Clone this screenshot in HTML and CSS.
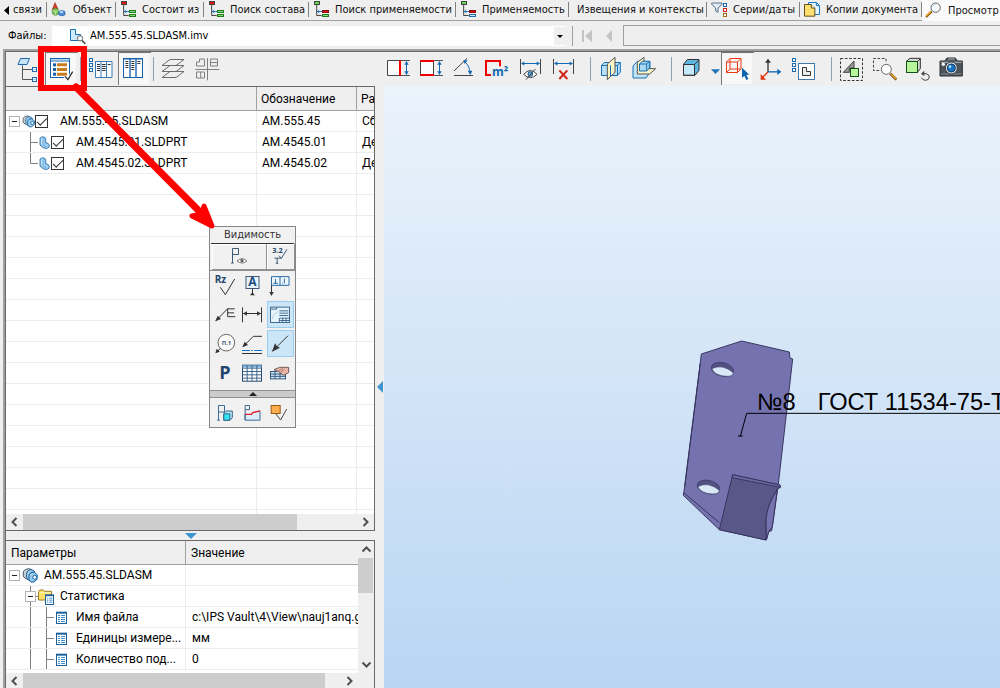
FILE: index.html
```html
<!DOCTYPE html>
<html lang="ru">
<head>
<meta charset="utf-8">
<title>Просмотр</title>
<link rel="stylesheet" href="styles.css">
</head>
<body>
<svg class="defs" aria-hidden="true">
  <symbol id="links" viewBox="0 0 54 54">
    <path d="M14 12V43.500H29M14 31.500H29" stroke="#444"/>
    <path d="M17 31.500H31M22 27l-5 4.500 5 4.500" stroke="#2a7ac0"/>
    <rect class="link-top" x="7.500" y="1.500" width="15" height="9"/>
    <rect class="link-mid" x="31.500" y="28.500" width="18" height="6"/>
    <rect class="link-low" x="31.500" y="40.500" width="18" height="6"/>
  </symbol>
  <symbol id="minus" viewBox="18 81 48 63">
    <rect x="28.500" y="97.500" width="30" height="30" fill="#fff" stroke="#b4b4b4"/>
    <path d="M36 112.500H51" stroke="#222"/>
  </symbol>
  <symbol id="asm" viewBox="66 81 48 63">
    <path d="M76 95l9-3 9 2 2 6-10 4-2 20-6-2-8-6 0-16z" fill="#c4d0d8" stroke="#46596a"/>
    <path d="M84 98l8-3 8 2 5 5-13 4-2 22-6-3-4-6 0-14z" fill="#a9d2f0" stroke="#1c5f96"/>
    <path d="M92 104l11-2 9 9-1 13-9 8-10 0-5-7 0-14z" fill="#9bccef" stroke="#125a96"/>
    <circle cx="104" cy="118" r="6" fill="#e6f4fc" stroke="#1b659f"/>
  </symbol>
  <symbol id="part" viewBox="114 144 48 63">
    <path d="M121.500 159l9-5 9 3 3 4v16l9 2 4 6-1 8-9 5-12-3-12-10z" fill="#9fd0f3" stroke="#17649f"/>
    <path d="M126 161v19l5 3v-17z" fill="#d9efff"/>
    <path d="M132 164l8-4M132 165v19l12 8" stroke="#5aa0d6"/>
  </symbol>
  <symbol id="sheet" viewBox="162 321 48 63">
    <rect x="169.500" y="337.500" width="30" height="33" fill="#fff" stroke="#1c5f9d"/>
    <path d="M168 338H201" stroke="#1c5f9d" stroke-width="6"/>
    <path d="M174 346.500h6m3 0h12M174 352.500h6m3 0h12M174 358.500h6m3 0h12M174 364.500h6m3 0h12" stroke="#3d8bd0"/>
  </symbol>
</svg>

<nav class="tabs">
  <a class="tab tab-cut" href="#"><svg width="5" height="9" viewBox="0 0 5 9"><path d="M5 0v9L0 4.500z" fill="#000"/></svg>связи</a>
  <a class="tab" href="#"><svg class="ic18" viewBox="150 3 54 54">
    <path d="M165 8l9 19-8 9-10-5z" fill="#e33a25" stroke="#8d3a20" stroke-width="2"/>
    <path d="M157 29l10-5 10 6v10l-10 7-10-6z" fill="#7ac55a" stroke="#3e7c31" stroke-width="2"/>
    <path d="M157 30l10 5 10-5M167 35v11" stroke="#e0f5c4" stroke-width="2"/>
    <path d="M176 35q9-7 19 0v9q-9 7-19 0z" fill="#4b8fdd" stroke="#1e4f99" stroke-width="2"/>
    <ellipse cx="184" cy="36" rx="6" ry="3" fill="#bcdcff"/></svg>Объект</a>
  <a class="tab" href="#"><svg class="ic18 down"><use href="#links"/></svg>Состоит из</a>
  <a class="tab" href="#"><svg class="ic18 down"><use href="#links"/></svg>Поиск состава</a>
  <a class="tab" href="#"><svg class="ic18 up"><use href="#links"/></svg>Поиск применяемости</a>
  <a class="tab" href="#"><svg class="ic18 up blue"><use href="#links"/></svg>Применяемость</a>
  <a class="tab plain" href="#">Извещения и контексты</a>
  <a class="tab" href="#"><svg class="ic18" viewBox="150 3 54 54">
    <path d="M155 9H186V13L174 24V37L167 33V24L155 13z" fill="#dce8f0" stroke="#58718a"/>
    <path d="M162 12l8 9" stroke="#fff"/>
    <rect x="190.500" y="10.500" width="9" height="9" fill="#fff" stroke="#1c6cb4"/>
    <rect x="190.500" y="25.500" width="9" height="9" fill="#fff" stroke="#d21f1f"/>
    <rect x="190.500" y="40.500" width="9" height="9" fill="#fff" stroke="#a86a13"/></svg>Серии/даты</a>
  <a class="tab" href="#"><svg class="ic18" viewBox="429 3 54 54">
    <path d="M445.500 7.500h24l9 9v27h-33z" fill="#e8f5ff" stroke="#1778c4"/>
    <path d="M469 7v10h10" stroke="#1778c4"/>
    <path d="M433.500 13.500h21l10 10v25h-31z" fill="#ffdf71" stroke="#65501d"/>
    <path d="M454 13v11h11" fill="#fff" stroke="#65501d"/></svg>Копии документа</a>
  <a class="tab active" href="#"><svg class="ic18" viewBox="795 3 54 54">
    <path d="M815 31L798 48" stroke="#7b4b0c" stroke-width="7"/><path d="M813 31L798 46" stroke="#f2a52c" stroke-width="4"/>
    <circle cx="827" cy="20" r="14" fill="#f5fbff" stroke="#646464"/><path d="M817 18q3-8 11-7" stroke="#c9d6df"/></svg>Просмотр</a>
</nav>

<div class="filebar">
  <label for="file">Файлы:</label>
  <div class="combo">
    <select id="file"><option>AM.555.45.SLDASM.imv</option></select>
    <svg class="combo-icon" viewBox="207 78 54 54">
      <path d="M211.500 85.500h15v15h15v18h-30z" fill="#cfeafb" stroke="#1670b4"/>
      <path d="M246 118l10 11" stroke="#555" stroke-width="5"/><circle cx="240" cy="112" r="8" fill="#f4fbff" stroke="#666"/></svg>
    <svg class="combo-arrow" viewBox="0 0 12 18"><path d="M0 0h12v18H0z" fill="#efefef"/><path d="M3 8h6l-3 3z" fill="#000"/></svg>
  </div>
  <span class="rule"></span>
  <button class="nav" aria-label="В начало" disabled><svg width="12" height="12" viewBox="0 0 12 12"><path d="M1 0h2v12H1zM11 0v12L4 6z" fill="#c3c3c3"/></svg></button>
  <button class="nav" aria-label="Назад" disabled><svg width="12" height="12" viewBox="0 0 12 12"><path d="M9 0v12L3 6z" fill="#c3c3c3"/></svg></button>
  <input class="address" type="text" aria-label="Документ">
</div>

<div class="workspace">
 <div class="frame">
  <div class="toolbar">
    <div class="tools tools-left">
      <button class="tool" aria-label="Дерево"><svg viewBox="36 24 99 99">
        <path d="M61.500 43.500H88.500L81 61.500H54z" fill="#c5e4f7" stroke="#1c69ad"/>
        <path d="M67.500 64V106.500H96M67.500 76.500H96" stroke="#555"/>
        <rect x="97.500" y="70.500" width="12" height="12" fill="#fff" stroke="#1c69ad"/><rect x="97.500" y="100.500" width="12" height="12" fill="#fff" stroke="#1c69ad"/>
        <path d="M100 76.500h7M100 106.500h7" stroke="#8ec5ea"/></svg></button>
      <button class="tool pressed" aria-label="Видимость"><svg viewBox="135 24 99 99">
        <rect x="151.500" y="43.500" width="57" height="57" fill="#fff" stroke="#1460ad"/><path d="M150 43.500H210M150 51H210" stroke="#1460ad"/>
        <path d="M153 47H208" stroke="#9fd0f2"/>
        <rect x="159" y="58" width="9" height="9" fill="#1460ad"/><rect x="159" y="72" width="9" height="9" fill="#1460ad"/><rect x="159" y="86" width="9" height="9" fill="#1460ad"/>
        <path d="M171 62.500H201M171 76.500H201M171 90.500H201" stroke="#c97a1a" stroke-width="9"/>
        <path d="M195 97l9 10 14-24" stroke="#fff" stroke-width="9"/><path d="M195 97l9 10 14-24" stroke="#333" stroke-width="4"/></svg></button>
      <span class="sep"></span>
      <button class="tool" aria-label="Столбцы"><svg viewBox="255 24 99 99">
        <rect x="268.500" y="43.500" width="9" height="9" fill="#fff" stroke="#1c6cb4"/><rect x="268.500" y="58.500" width="9" height="9" fill="#fff" stroke="#1c6cb4"/><rect x="268.500" y="73.500" width="9" height="9" fill="#fff" stroke="#1c6cb4"/>
        <path d="M285 52.500H336V100.500H286.500V52.500M303 52V100M319.500 52V100" fill="#f8fcff" stroke="#3c7cb4"/>
        <path d="M291 61.500h9M291 67.500h9M291 73.500h9M291 79.500h9M306 61.500h11M306 67.500h11M306 73.500h11M306 79.500h11M323 61.500h9" stroke="#333"/></svg></button>
      <button class="tool pressed" aria-label="Таблица"><svg viewBox="354 24 99 99">
        <rect x="370.500" y="43.500" width="57" height="57" fill="#fff" stroke="#1460ad"/><path d="M390 43V100M408 43V100M370 44.500H428" stroke="#1460ad" stroke-width="4"/>
        <path d="M376 52.500h9M376 58.500h9M376 64.500h9M376 70.500h9M394 52.500h9M394 58.500h9M394 64.500h9M394 70.500h9M394 76.500h9M412 52.500h9M412 58.500h9" stroke="#333"/></svg></button>
      <span class="sep"></span>
      <button class="tool" aria-label="Слои"><svg viewBox="474 24 99 99" stroke="#6c6c6c" fill="#efefef">
        <path d="M486 100.500H528L552 82.500H510z"/><path d="M486 82.500H528L552 64.500H510z"/><path d="M486 64.500H528L552 46.500H510z"/></svg></button>
      <button class="tool" aria-label="Виды"><svg viewBox="573 24 99 99" stroke="#808080">
        <path d="M589.500 66V54H598.500V45H613.500V66zM631.500 45H652.500V66H631.500zM589.500 84H613.500V102H589.500zM602 84V102M631 55.500H652M622.500 42V109M586 76.500H658"/></svg></button>
    </div>
    <div class="tools">
      <button class="tool" aria-label="Ширина"><svg viewBox="6 12 99 99">
        <path d="M60 37.500H22.500V82.500H60" fill="#fafcfe" stroke="#444"/><path d="M60 37.500H90M60 82.500H90" stroke="#555"/><path d="M60 36V84" stroke="#f00000" stroke-width="6"/>
        <path d="M79.500 41V79" stroke="#1269b3"/><path d="M73 50l6.500-11 6.500 11zM73 70l6.500 11 6.500-11z" fill="#1269b3"/></svg></button>
      <button class="tool" aria-label="Высота"><svg viewBox="105 12 99 99">
        <rect x="121.500" y="39" width="39" height="42" fill="#fafcfe" stroke="#444"/><path d="M160 37.500H189M160 82.500H189" stroke="#555"/><path d="M120 39H162M120 81H162" stroke="#f00000" stroke-width="6"/>
        <path d="M178.500 41V79" stroke="#1269b3"/><path d="M172 50l6.500-11 6.500 11zM172 70l6.500 11 6.500-11z" fill="#1269b3"/></svg></button>
      <button class="tool" aria-label="Угол"><svg viewBox="204 12 99 99">
        <path d="M222 69L261 31M222 82.500H279" stroke="#444"/><path d="M255 42Q270 55 270 78" stroke="#1269b3"/><path d="M250 37h13l-9 11zM263 68h14l-6 13z" fill="#1269b3"/></svg></button>
      <button class="tool" aria-label="Площадь"><svg viewBox="303 12 99 99">
        <path d="M333 81H318V39H360V55" fill="none" stroke="#f00000" stroke-width="6"/>
        <text class="m2" x="336" y="84">m²</text></svg></button>
      <button class="tool" aria-label="Скрыть размеры"><svg viewBox="402 12 99 99">
        <path d="M421.500 33V78M481.500 33V78" stroke="#444"/><path d="M426 46.500H478" stroke="#1269b3"/><path d="M423 46.500l10-6v12zM480 46.500l-10-6v12z" fill="#1269b3"/>
        <path d="M431 79Q451 56 471 79Q451 99 431 79z" fill="#fff" stroke="#444"/><circle cx="451" cy="78" r="7" fill="#5faadb" stroke="#1c5b8e"/><path d="M438 95L466 63" stroke="#444"/></svg></button>
      <button class="tool" aria-label="Удалить размеры"><svg viewBox="501 12 99 99">
        <path d="M520.500 33V78M580.500 33V78" stroke="#444"/><path d="M525 46.500H577" stroke="#1269b3"/><path d="M522 46.500l10-6v12zM579 46.500l-10-6v12z" fill="#1269b3"/>
        <path d="M538 67L562 93M562 67L538 93" stroke="#cf2516" stroke-width="6"/></svg></button>
      <span class="sep wide"></span>
      <button class="tool" aria-label="Сечение"><svg viewBox="12 12 99 99">
        <path d="M34.500 52.500L43 43.500H91V72L82.500 82.500H34.500z" fill="#b9e0f5" stroke="#1670b4"/><path d="M34 52.500H82.500V83M82 52L91 43" stroke="#1670b4"/>
        <path d="M52 48L75 28V73L52 95z" fill="#fbf3c5" stroke="#555"/><path d="M61.500 52V84" stroke="#1670b4"/></svg></button>
      <button class="tool" aria-label="Разрез"><svg viewBox="111 12 99 99">
        <path d="M129 54L142 40H180V72L168 90H129z" fill="#c0e3f6" stroke="#1670b4"/>
        <path d="M142 43L162 28V62H197L179 78H142z" fill="#fdf5c4" stroke="#555"/>
        <path d="M148.500 48L157 40H178V60L170 69H148.500zM148.500 48H170V69M170 48L178 40" fill="#a9d8f3" stroke="#1670b4"/></svg></button>
      <span class="sep wide"></span>
      <button class="tool" aria-label="Вид модели"><svg viewBox="255 12 99 99">
        <path d="M280.500 49L292 34.500H327V67L315 82H280.500z" fill="#5db5e2" stroke="#333"/><path d="M280.500 49.500H313.500V81.500H280.500z" fill="#c4e9f8" stroke="#333"/><path d="M314 49L327 36" stroke="#333"/></svg></button>
      <button class="drop" aria-label="Варианты вида"><svg viewBox="354 12 39 99"><path d="M363 64H390L376.500 78z" fill="#2275b5"/></svg></button>
      <button class="tool pressed" aria-label="Выбор"><svg viewBox="393 12 99 99">
        <path d="M409.500 42L420 31.500H453V63L442.500 73.500H409.500zM409.500 42H442.500V73.500M442.500 42L453 31.500M420 32V63H453M420 63L409.500 73.500" stroke="#ef3b13"/>
        <path d="M456 59V90L463 83 469 96 475 93 469 80H478z" fill="#0d62ad"/></svg></button>
      <button class="tool" aria-label="Оси"><svg viewBox="492 12 99 99">
        <path d="M534 72V38" stroke="#333" stroke-width="4"/><path d="M525 44l9-12 9 12z" fill="#333"/><path d="M534 71.500H566" stroke="#1269b3" stroke-width="4"/><path d="M562 62l12 9.500-12 9.500z" fill="#1269b3"/>
        <path d="M534 72L518 88" stroke="#e23212" stroke-width="4"/><path d="M512 78v17h16z" fill="#e23212"/></svg></button>
      <button class="tool" aria-label="Структура"><svg viewBox="-9 12 99 99">
        <rect x="7.500" y="31.500" width="9" height="9" fill="#fff" stroke="#1c6cb4"/><rect x="7.500" y="46.500" width="9" height="9" fill="#fff" stroke="#1c6cb4"/><rect x="7.500" y="61.500" width="9" height="9" fill="#fff" stroke="#1c6cb4"/>
        <rect x="25.500" y="46.500" width="48" height="48" fill="#fff" stroke="#3f78ac"/><path d="M37.500 58.500H49.500V70.500H61.500V82.500H37.500z" fill="#ececec" stroke="#333"/></svg></button>
      <span class="sep wide"></span>
      <button class="tool" aria-label="Показать всё"><svg viewBox="135 12 99 99">
        <rect x="151.500" y="31.500" width="66" height="66" stroke="#333" stroke-dasharray="8 5"/>
        <path d="M160 73L192 39V60H178V73z" fill="#9a9a9a" stroke="#444"/><rect x="181.500" y="61.500" width="24" height="24" fill="#b7f69d" stroke="#0d5213"/></svg></button>
      <button class="tool" aria-label="Увеличить область"><svg viewBox="234 12 99 99">
        <path d="M288 40V31.500H250.500V67.500H270" stroke="#444" stroke-dasharray="8 5"/>
        <path d="M301 77L319 95" stroke="#6c4410" stroke-width="8"/><path d="M303 78L318 93" stroke="#f4a72f" stroke-width="4"/><circle cx="289" cy="64" r="15" fill="#fcfeff" stroke="#666"/></svg></button>
      <button class="tool" aria-label="Повернуть"><svg viewBox="333 12 99 99">
        <path d="M349 40L360 31H391V62L382 73z" fill="#d6d6d6" stroke="#333"/><rect x="349.500" y="40.500" width="33" height="33" fill="#b7f69d" stroke="#0d5213"/><path d="M383 40L391 32" stroke="#333"/>
        <path d="M399 77H408Q418 79 418 87Q417 97 406 97Q397 96 394 89" stroke="#444"/><path d="M403 68v17l-10-8z" fill="#444"/></svg></button>
      <button class="tool" aria-label="Снимок"><svg viewBox="432 12 99 99">
        <path d="M450 39H464L471 30H496L502 39H517V84H450z" fill="#4d555c" stroke="#2b2f33"/><path d="M452 43H515M474 33H494" stroke="#aeb7be"/><path d="M452 78H515" stroke="#80888f"/>
        <circle cx="484" cy="60" r="18" fill="#d8dde0" stroke="#3a4045"/><circle cx="484" cy="60" r="12" fill="#1573c8" stroke="#103b66"/><circle cx="480" cy="56" r="4" fill="#b4e1ff"/><circle cx="460" cy="49" r="5" fill="#fff"/></svg></button>
    </div>
  </div>

  <div class="content">
    <div class="side">
      <section class="panel panel-tree">
        <div class="grid-area tree-area">
          <table class="grid tree-grid">
            <colgroup><col class="c-name"><col class="c-code"><col></colgroup>
            <thead><tr><th></th><th>Обозначение</th><th>Ра</th></tr></thead>
            <tbody>
              <tr><td><div class="node"><button class="twig" aria-label="Свернуть"><svg><use href="#minus"/></svg></button><svg class="kind"><use href="#asm"/></svg><input type="checkbox" id="n1" checked><label for="n1">AM.555.45.SLDASM</label></div></td><td>AM.555.45</td><td>Сб</td></tr>
              <tr><td><div class="node level"><svg class="twig" viewBox="66 144 48 63"><path d="M91.500 141V207M91.500 175.500H114" stroke="#808080"/></svg><svg class="kind"><use href="#part"/></svg><input type="checkbox" id="n2" checked><label for="n2">AM.4545.01.SLDPRT</label></div></td><td>AM.4545.01</td><td>Де</td></tr>
              <tr><td><div class="node level"><svg class="twig" viewBox="66 144 48 63"><path d="M91.500 141V175.500H114" stroke="#808080"/></svg><svg class="kind"><use href="#part"/></svg><input type="checkbox" id="n3" checked><label for="n3">AM.4545.02.SLDPRT</label></div></td><td>AM.4545.02</td><td>Де</td></tr>
            </tbody>
          </table>
        </div>
        <div class="hscroll"><svg class="arr" viewBox="0 0 17 15"><path d="M10.500 3.500L6.500 7.500l4 4" stroke="#505050" stroke-width="2"/></svg><span class="track"><span class="thumb"></span></span><svg class="arr" viewBox="0 0 17 15"><path d="M6.500 3.500l4 4-4 4" stroke="#505050" stroke-width="2"/></svg></div>
      </section>
      <div class="split-h"><svg width="12" height="6" viewBox="0 0 12 6"><path d="M0 0h12L6 6z" fill="#3f95d2"/></svg></div>
      <section class="panel panel-props">
        <div class="props-row">
          <div class="grid-area props-area">
            <table class="grid props-grid">
              <colgroup><col class="c-param"><col></colgroup>
              <thead><tr><th>Параметры</th><th>Значение</th></tr></thead>
              <tbody>
                <tr><td><div class="node"><button class="twig" aria-label="Свернуть"><svg><use href="#minus"/></svg></button><svg class="kind16"><use href="#asm"/></svg><span>AM.555.45.SLDASM</span></div></td><td></td></tr>
                <tr><td><div class="node level"><button class="twig" aria-label="Свернуть"><svg viewBox="66 258 48 63"><path d="M91.500 258V321M91 289.500H114" stroke="#808080"/><rect x="76.500" y="274.500" width="30" height="30" fill="#fff" stroke="#b4b4b4"/><path d="M84 289.500H99" stroke="#222"/></svg></button><svg class="kind16" viewBox="114 258 48 63">
                  <path d="M115.500 275l4-5h10l4 4h21v26h-39z" fill="#ffdf68" stroke="#9b7b20"/><path d="M118 278H152" stroke="#fff5bd"/><rect x="136.500" y="285.500" width="24" height="28" fill="#fff" stroke="#1c5f9d"/><path d="M135 286H162" stroke="#1c5f9d" stroke-width="5"/><path d="M141 294.500h4m3 0h9M141 300.500h4m3 0h9M141 306.500h4m3 0h9" stroke="#3d8bd0"/></svg><span>Статистика</span></div></td><td></td></tr>
                <tr><td><div class="node level"><svg class="twig" viewBox="66 321 48 63"><path d="M91.500 321V384" stroke="#808080"/></svg><svg class="twig" viewBox="114 321 48 63"><path d="M139.500 318V384M139 352.500H162" stroke="#808080"/></svg><svg class="kind16"><use href="#sheet"/></svg><span>Имя файла</span></div></td><td>c:\IPS Vault\4\View\nauj1anq.g</td></tr>
                <tr><td><div class="node level"><svg class="twig" viewBox="66 321 48 63"><path d="M91.500 321V384" stroke="#808080"/></svg><svg class="twig" viewBox="114 321 48 63"><path d="M139.500 318V384M139 352.500H162" stroke="#808080"/></svg><svg class="kind16"><use href="#sheet"/></svg><span>Единицы измере...</span></div></td><td>мм</td></tr>
                <tr><td><div class="node level"><svg class="twig" viewBox="66 321 48 63"><path d="M91.500 321V384" stroke="#808080"/></svg><svg class="twig" viewBox="114 321 48 63"><path d="M139.500 318V384M139 352.500H162" stroke="#808080"/></svg><svg class="kind16"><use href="#sheet"/></svg><span>Количество под...</span></div></td><td>0</td></tr>
              </tbody>
            </table>
          </div>
          <div class="vscroll"><svg class="varr" viewBox="0 0 15 17"><path d="M4 10.500l4-4 4 4" stroke="#505050" stroke-width="2"/></svg><span class="vtrack"><span class="vthumb"></span></span><svg class="varr" viewBox="0 0 15 17"><path d="M4 6.500l4 4 4-4" stroke="#505050" stroke-width="2"/></svg></div>
        </div>
        <div class="hscroll short"><svg class="arr" viewBox="0 0 17 15"><path d="M10.500 3.500L6.500 7.500l4 4" stroke="#505050" stroke-width="2"/></svg><span class="track"><span class="thumb"></span></span><svg class="arr" viewBox="0 0 17 15"><path d="M6.500 3.500l4 4-4 4" stroke="#505050" stroke-width="2"/></svg></div>
      </section>
    </div>
    <div class="split-v"><svg width="6" height="12" viewBox="0 0 6 12"><path d="M6 0v12L0 6z" fill="#3f95d2"/></svg></div>
    <div class="viewport">
      <svg class="model" viewBox="0 0 990 660">
        <g stroke="#38355f" stroke-linejoin="round">
          <path d="M94 72L215 33 358 66 360 84 368 87 325 462 307 590 305 602 296 605 289 630 148 599 40 496 44 470z" fill="#7573af"/>
          <path d="M42 489L148 578M44 470L91 100" fill="none"/>
          <path d="M188 434L330 465 331 472 322 478Q291 525 288 570L288 630 148 599z" fill="#585787"/>
          <path d="M188 434L330 465 331 472 186 443z" fill="#6c6aa5"/>
          <path d="M322 478Q291 525 288 570L289 630 296 605 307 590z" fill="#7573af"/>
          <g fill="#535184" stroke-width="2"><ellipse cx="157" cy="118" rx="34" ry="20" transform="rotate(12 157 118)"/><ellipse cx="115" cy="471" rx="34" ry="20" transform="rotate(12 115 471)"/></g>
          <g fill="#d9e8f7" stroke-width="2"><path d="M125 116Q157 100 190 128Q190 140 168 139Q134 137 125 116z"/><path d="M83 470Q115 453 148 481Q148 493 126 492Q92 490 83 470z"/></g>
        </g>
        <path d="M990 250H230L211 319M204 318H218" fill="none" stroke="#000"/>
        <text x="261" y="240">№8</text><text x="443" y="240">ГОСТ 11534-75-Т</text>
      </svg>
    </div>
  </div>
 </div>
</div>

<div class="palette" role="toolbar" aria-label="Видимость">
  <div class="palette-title">Видимость</div>
  <div class="palette-head">
    <button aria-label="Показать обозначения"><svg width="54" height="25" viewBox="96 135 162 75"><path d="M157.500 192V148.500H175.500V166.500H158M153 192h8" stroke="#3f5974"/><path d="M171 186Q186 172 201 186Q186 198 171 186z" fill="#fff" stroke="#777"/><circle cx="186" cy="185" r="5" fill="#666"/></svg></button>
    <button aria-label="Шероховатость"><svg width="27" height="25" viewBox="258 135 81 75"><text class="ra" x="274" y="161">3.2</text><path d="M294 170l7 8 17-27M280 177.500H301M288.500 178V193M284 192.500h8" stroke="#3f5974"/></svg></button>
  </div>
  <div class="palette-grid main-set">
    <button aria-label="Rz"><svg viewBox="90 213 84 87"><text class="rz" x="104" y="250">Rz</text><path d="M121 262L136 284 164 237" stroke="#333"/></svg></button>
    <button aria-label="База"><svg viewBox="174 213 84 87"><rect x="198" y="229.500" width="39" height="36" fill="#e8f3fb" stroke="#3f5974"/><text class="base" x="205" y="259">A</text><path d="M217.500 266V284" stroke="#333"/><path d="M210 286l7-9 8 9z" fill="#333"/></svg></button>
    <button aria-label="Допуск"><svg viewBox="258 213 84 87"><path d="M274.500 230H327V256H274.500zM300 230V256" fill="#eef7fd" stroke="#2a6aa5"/><path d="M286.500 237V250M280 250H294M313 236V250M307 250h2" stroke="#2a6aa5"/><path d="M274.500 256V280" stroke="#333"/><path d="M268 276h13l-6.500 12z" fill="#333"/></svg></button>
    <button aria-label="Сварка"><svg viewBox="90 300 84 87"><path d="M107 363L143 326V350H166M143 326.500H164M143 338.500H162" stroke="#333"/><path d="M106 364l7-17 10 10z" fill="#333"/></svg></button>
    <button aria-label="Размеры"><svg viewBox="174 300 84 87"><path d="M187.500 322V367M244.500 322V367M190 340.500H242" stroke="#333"/><path d="M189 340.500l12-7v14zM243 340.500l-12-7v14z" fill="#333"/></svg></button>
    <button class="on" aria-label="Основная надпись"><svg viewBox="258 300 84 87"><rect x="271.500" y="321.500" width="57" height="46" fill="#e6f4fc" stroke="#416b91"/><path d="M272 327.500H290V322M298 332.500H325M298 339.500H325M298 346.500H325M298 354.500V367M298 354.500H328M298 361.500H328M308 355V367M318 355V367" stroke="#416b91"/><path d="M276 358Q280 340 294 334" stroke="#b8c9d8"/></svg></button>
    <button aria-label="Позиции"><svg viewBox="90 387 84 87"><circle cx="139" cy="428" r="25" fill="#fafafa" stroke="#666"/><text class="tiny" x="125" y="434">П.1</text><path d="M121 445L110 457" stroke="#333"/><path d="M106 460l4-14 9 9z" fill="#333"/></svg></button>
    <button aria-label="Выноски"><svg viewBox="174 387 84 87"><path d="M189 440L220 409H246M186 460.500H246" stroke="#333"/><path d="M187 442l7-17 10 10z" fill="#333"/><path d="M186 451.500H246" stroke="#1276cf" stroke-dasharray="24 4 5 4"/></svg></button>
    <button class="on" aria-label="Стрелки"><svg viewBox="258 387 84 87"><path d="M277 454L324 407" stroke="#333"/><path d="M276 455l9-25 6 9 9 4z" fill="#333"/></svg></button>
    <button aria-label="P"><svg viewBox="90 474 84 87"><text class="pee" x="118" y="536">P</text></svg></button>
    <button aria-label="Таблицы"><svg viewBox="174 474 84 87"><rect x="187.500" y="495.500" width="57" height="48" fill="#fff" stroke="#23486d"/><path d="M187 499H245" stroke="#75add6" stroke-width="6"/><path d="M187 504.500H245M187 514.500H245M187 524.500H245M187 534.500H245M201.500 495V544M216 495V544M230.500 495V544" stroke="#3f6890"/></svg></button>
    <button aria-label="Технические требования"><svg viewBox="258 474 84 87"><rect x="271.500" y="514.500" width="45" height="22" fill="#d9edfa" stroke="#31597d"/><path d="M271 522H316M271 529H316M285 514V536M300 514V536" stroke="#31597d"/><path d="M282 509L299 502H326V518L310 526 300 517z" fill="#eab8ab" stroke="#745b58"/><path d="M292 515L308 506M298 520L314 508" stroke="#b77a6f"/></svg></button>
  </div>
  <button class="palette-fold" aria-label="Свернуть панель"><svg width="8" height="4" viewBox="0 0 8 4"><path d="M0 4h8L4 0z" fill="#222"/></svg></button>
  <div class="palette-grid">
    <button aria-label="Флажок и тело"><svg viewBox="90 594 84 87"><path d="M115.500 660V616.500H133.500V636H116M111 660.500h9" stroke="#3f6890"/><path d="M131 641l8-8h18v20l-7 8h-19z" fill="#aee5f2" stroke="#3f6890"/><path d="M131.500 641.500h18v19h-18z" fill="#2fe6f2" stroke="#3f6890"/></svg></button>
    <button aria-label="Флажок и профиль"><svg viewBox="174 594 84 87"><path d="M196 643H214Q217 636 225 636T240 632V660H196z" fill="#dceefa"/><path d="M195.500 660V616.500H208.500V629H196M195 642V660.500H240V633" stroke="#3f6890"/><path d="M196 643H214Q217 636 225 636T240 632" stroke="#e21c2a" stroke-width="4"/></svg></button>
    <button aria-label="Поверхность"><svg viewBox="258 594 84 87"><rect x="273.500" y="616.500" width="27" height="24" fill="#ffad4d" stroke="#9b5b18"/><path d="M287 641l15 19 18-33" stroke="#444"/></svg></button>
  </div>
</div>

<svg class="callout" viewBox="0 0 180 186" aria-hidden="true" stroke="#f00" stroke-linecap="round">
  <rect x="3" y="3" width="43" height="39" stroke-width="6"/>
  <path d="M38 41L164 168" stroke-width="7"/>
  <path d="M154 170L174 180 166 160 164 168z" fill="#f00" stroke-width="5" stroke-linejoin="round"/>
</svg>
</body>
</html>
```
FILE: styles.css
```css
* { box-sizing: border-box; }

html, body { height: 100%; }

body {
  margin: 0;
  display: flex;
  flex-direction: column;
  overflow: hidden;
  background: #efefef;
  color: #000;
  font: 12px/20px Roboto, "Noto Sans", sans-serif;
}

svg { display: block; flex: none; fill: none; stroke-width: 3; overflow: visible; }
svg text { stroke: none; }
.defs { position: absolute; width: 0; height: 0; }
button { display: flex; align-items: center; justify-content: center; margin: 0; padding: 0; border: 0; background: none; font: inherit; }

/* document tabs */
.tabs {
  flex: none;
  display: grid;
  grid-template-columns: 47px 69px 88px 105px 147px 113px 138px 93px 122px 1fr;
  height: 21px;
  font: 11px/18px "DejaVu Sans Condensed", "DejaVu Sans", sans-serif;
}
.tab {
  display: flex;
  align-items: center;
  gap: 5px;
  padding-left: 3px;
  border-bottom: 1px solid #a0a0a0;
  color: #111;
  text-decoration: none;
  white-space: nowrap;
  background: linear-gradient(#808080, #808080) right 2px / 1px 15px no-repeat;
}
.tab-cut { padding-left: 4px; gap: 4px; }
.plain { padding-left: 8px; }
.active { border-bottom: 0; background: #fafafa; }
.ic18 { width: 18px; height: 18px; }
.down { --top: #e01010; --mid: #7fe070; --low: #7fe070; --mid-line: #1d7a1d; --low-line: #1d7a1d; }
.up { --top: #66d94e; --mid: #e01010; --low: #7fe070; --mid-line: #8c0d0d; --low-line: #1d7a1d; }
.blue { --low: #d4ecfc; --low-line: #1c6cb4; }
.link-top { fill: var(--top); stroke: #444; }
.link-mid { fill: var(--mid); stroke: var(--mid-line); }
.link-low { fill: var(--low); stroke: var(--low-line); }

/* file selector row */
.filebar {
  flex: none;
  display: flex;
  align-items: center;
  height: 28px;
  padding: 2px 0 1px 8px;
  font: 11px/18px "DejaVu Sans Condensed", "DejaVu Sans", sans-serif;
}
.filebar label { width: 44px; }
.combo { position: relative; flex: 0 1 514px; height: 20px; background: #fff; }
.combo select { width: 100%; height: 20px; padding: 1px 0 0 38px; border: 0; appearance: none; background: #fff; color: #000; font: inherit; }
.combo-icon { position: absolute; left: 17px; top: 1px; width: 18px; height: 18px; }
.combo-arrow { position: absolute; right: 0; top: 1px; width: 12px; height: 18px; }
.rule { width: 1px; height: 20px; margin: 0 8px 0 6px; background: #a0a0a0; }
.nav { width: 12px; margin-right: 10px; }
.address { flex: 1; min-width: 0; height: 21px; margin-left: -2px; border: 1px solid #a0a0a0; border-right: 0; background: #efefef; }

.workspace { flex: 1; min-height: 0; display: flex; margin-left: 3px; border: solid #a0a0a0; border-width: 2px 0 0 2px; }
.frame { flex: 1; min-width: 0; display: flex; flex-direction: column; border: solid #696969; border-width: 1px 0 0 1px; }

.toolbar { flex: none; display: flex; height: 34px; }
.tools { display: flex; align-items: flex-start; }
.tools-left { width: 376px; padding-left: 6px; }
.tool, .tool svg { width: 33px; height: 33px; }
.tool { flex: none; }
.drop, .drop svg { width: 13px; height: 33px; }
.pressed { background: linear-gradient(#f8f8f8, #f8f8f8) 1px 2px / 30px 30px no-repeat; box-shadow: inset 1px 1px #777; }
.sep { width: 7px; height: 24px; margin-top: 5px; background: linear-gradient(#8f9db5, #8f9db5) 2px 0 / 1px 24px no-repeat; }
.sep.wide { width: 15px; background-position: 11px 0; }
.sep.wide:first-of-type { width: 14px; background-position: 10px 0; }
.m2 { fill: #1269b3; font: bold 36px "Open Sans", sans-serif; }

.content { flex: 1; min-height: 0; display: flex; }
.side { flex: none; width: 369px; display: flex; flex-direction: column; }
.panel { display: flex; flex-direction: column; border: 1px solid #696969; border-left: 0; }
.panel-tree { flex: 1; min-height: 0; }
.panel-props { flex: none; border-bottom: 0; }

.grid-area { overflow: hidden; background-color: #fff; }
.tree-area {
  flex: 1;
  min-height: 0;
  background-image:
    linear-gradient(#ececec, #ececec), linear-gradient(#ececec, #ececec),
    repeating-linear-gradient(#fff 0 20px, #ececec 20px 21px);
  background-position: 250px 0, 350px 0, 0 24px;
  background-size: 1px 100%, 1px 100%, 100% 100%;
  background-repeat: no-repeat;
}
.grid { width: 100%; border-collapse: separate; border-spacing: 0; table-layout: fixed; }
.c-name { width: 251px; }
.c-code { width: 100px; }
.c-param { width: 180px; }
.grid th {
  height: 24px;
  padding: 0 0 0 4px;
  overflow: hidden;
  border-bottom: 1px solid #a0a0a0;
  border-right: 1px solid #a0a0a0;
  background: #efefef;
  font-weight: normal;
  text-align: left;
  white-space: nowrap;
}
.grid td {
  height: 21px;
  padding: 0 0 0 5px;
  overflow: hidden;
  border-bottom: 1px solid #ececec;
  border-right: 1px solid #ececec;
  white-space: nowrap;
}
.grid th:last-child, .grid td:last-child { border-right: 0; }
.grid td:first-child { padding: 0; }
.props-grid th:first-child { padding-left: 5px; }
.props-grid th + th { padding-left: 5px; }
.props-grid td + td { padding-left: 6px; }
.node { display: flex; align-items: center; height: 20px; }
.level { padding-left: 16px; }
.twig, .twig svg { width: 16px; height: 21px; }
.kind { width: 13px; height: 21px; }
.kind use { width: 16px; height: 21px; }
.kind16 { width: 16px; height: 21px; margin-right: 6px; }
.node input {
  position: relative;
  z-index: 1;
  flex: none;
  width: 13px;
  height: 13px;
  margin: 0 12px 0 0;
  border: 1px solid #333;
  appearance: none;
  background: #fff;
}
.node input:checked::before {
  content: "";
  display: block;
  width: 9px;
  height: 4px;
  margin: 2px 1px;
  border: solid #333;
  border-width: 0 0 1px 1px;
  transform: rotate(-45deg);
}

.hscroll { flex: none; display: flex; height: 16px; background: #efefef; }
.arr { width: 17px; height: 16px; }
.track { flex: 1; }
.thumb { display: block; width: 82%; height: 16px; background: #cdcdcd; }
.split-h { flex: none; display: flex; justify-content: center; height: 9px; padding-top: 2px; }
.split-v { flex: none; display: flex; align-items: center; justify-content: center; width: 9px; }
.props-row { display: flex; }
.props-area { flex: 1; min-width: 0; height: 132px; }
.vscroll { flex: none; display: flex; flex-direction: column; width: 16px; background: #efefef; }
.varr { width: 16px; height: 17px; }
.vtrack { flex: 1; }
.vthumb { display: block; width: 15px; height: 36%; background: #cdcdcd; }
.short { height: 15px; padding-right: 16px; }
.short .thumb { width: 95%; }

/* 3D view */
.viewport { position: relative; flex: 1; min-width: 0; overflow: hidden; background: linear-gradient(#ebf3fb, #b9d5f3); }
.model { position: absolute; left: 286px; top: 244px; width: 330px; height: 220px; }
.model text { fill: #000; font: 71px "Liberation Sans", Arial, sans-serif; }

/* floating visibility palette */
.palette {
  position: absolute;
  left: 209px;
  top: 226px;
  width: 87px;
  border: 1px solid #868686;
  background: #f1f1f1;
}
.palette-title { height: 17px; margin: 0 1px; border-bottom: 1px solid #333; font: 11px/16px "DejaVu Sans Condensed", "DejaVu Sans", sans-serif; color: #333; text-align: center; }
.palette-head { display: flex; padding: 0 2px; border-bottom: 1px solid #909090; }
.palette-head button { height: 26px; border: solid #909090; border-width: 0 1px 1px 0; box-shadow: inset 1px 1px #fff; }
.palette-grid { display: grid; grid-template-columns: repeat(3, 28px); }
.palette-grid button, .palette-grid svg { width: 28px; height: 29px; }
.main-set { padding-bottom: 3px; }
.on { background: linear-gradient(#cce6f8, #cce6f8) center / 25px 25px no-repeat, linear-gradient(#99cdf0, #99cdf0) center / 27px 27px no-repeat; }
.palette-fold { width: 100%; height: 8px; border: solid #909090; border-width: 1px 0; background: #cbcbcb; }
.tiny { fill: #3f5974; font: bold 18px "Open Sans", sans-serif; }
.ra { fill: #24466d; font: bold 22px "Open Sans", sans-serif; }
.rz { fill: #24466d; font: bold 30px "Open Sans", sans-serif; }
.base { fill: #1c4c80; font: bold 36px "Open Sans", sans-serif; }
.pee { fill: #24466d; font: bold 54px "Open Sans", sans-serif; }

/* highlight of the visibility button with the arrow to its palette */
.callout { position: absolute; left: 38px; top: 46px; width: 180px; height: 186px; pointer-events: none; }
```
